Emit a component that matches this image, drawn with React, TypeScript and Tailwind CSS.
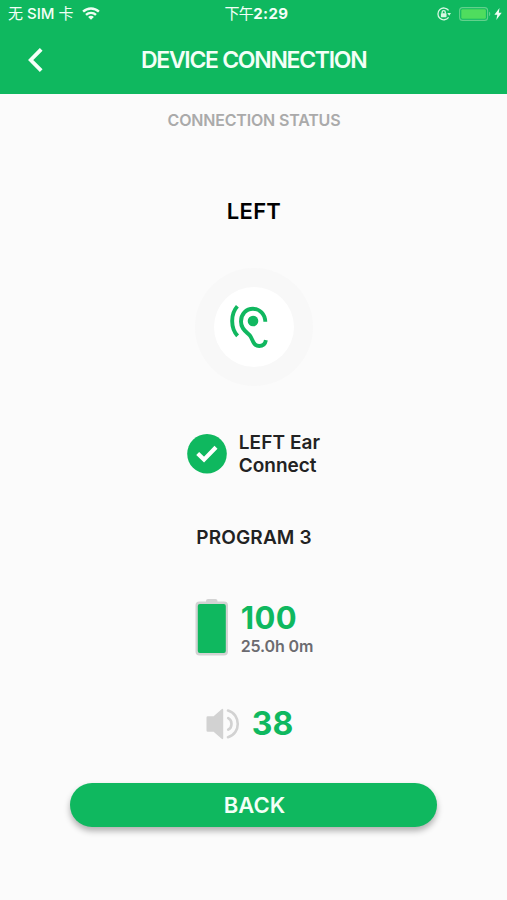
import type { ReactNode } from "react";

const FONT = "font-['Inter','Noto_Sans_CJK_SC',sans-serif]";

function WifiIcon() {
  return (
    <svg width="18" height="13" viewBox="0 0 18 13" fill="none" stroke="#effdf3" strokeWidth="2.4">
      <path d="M1.1 4.7 C5.5 0.4 12.5 0.4 16.9 4.7" />
      <path d="M4 7.9 C6.8 5.2 11.2 5.2 14 7.9" />
      <path d="M9 12.8 L6.1 9.9 C7.7 8.5 10.3 8.5 11.9 9.9 Z" fill="#effdf3" stroke="none" />
    </svg>
  );
}

function RotationLockIcon() {
  return (
    <svg width="14" height="14" viewBox="0 0 14 14" fill="none" stroke="#d8f7e3" strokeWidth="1.3">
      <path d="M11.6 3.4 A5.9 5.9 0 1 0 11.6 10.4" />
      <path d="M10.3 6 H14 L12.2 8.8 Z" fill="#d8f7e3" stroke="none" />
      <rect x="3.9" y="6.2" width="5.6" height="4" rx="0.6" fill="#d8f7e3" stroke="none" />
      <path d="M5.1 6.4 V5.2 A1.6 1.6 0 0 1 8.3 5.2 V6.4" />
    </svg>
  );
}

function StatusBattery() {
  return (
    <svg width="32" height="14" viewBox="0 0 32 14">
      <rect x="0.6" y="0.6" width="28" height="12.8" rx="3" fill="none" stroke="#62d18c" strokeWidth="1.1" />
      <rect x="2.3" y="2.3" width="24.6" height="9.4" rx="1.2" fill="#4fdd5e" />
      <path d="M30 4.8 C31.7 5.4 31.7 8.6 30 9.2 Z" fill="#62d18c" />
    </svg>
  );
}

function EarIcon() {
  return (
    <svg width="80" height="80" viewBox="0 0 80 80" fill="none" stroke="#10b75f" strokeWidth="3.9">
      <circle cx="39" cy="34" r="5.3" fill="#10b75f" stroke="none" />
      <path d="M51.3 34.8 C51.1 26.8 45.6 21.8 39 21.8 C32 21.8 27 27.2 27 34.4 C27 42 32.3 44.6 35.8 48.4 C38.8 51.8 38.6 59 45.2 59 C49.1 59 51.2 57 51.9 53.1" />
      <path d="M23.4 19.2 C16.4 26.8 16.4 41 23.6 48.9" />
    </svg>
  );
}

function BatteryIcon() {
  return (
    <svg width="34" height="57" viewBox="0 0 34 57">
      <rect x="11" y="0" width="11.5" height="6" rx="2" fill="#d3d3d3" />
      <rect x="0.5" y="2.5" width="32.5" height="54" rx="4" fill="#d3d3d3" />
      <rect x="2.8" y="5" width="28" height="49" rx="2" fill="#0fb85f" />
    </svg>
  );
}

function SpeakerIcon() {
  return (
    <svg width="34" height="32" viewBox="0 0 34 32">
      <path d="M1.8 8.2 H7.6 L15.6 1.2 Q17.2 0 17.2 2 V30 Q17.2 32 15.6 30.8 L7.6 23.8 H1.8 Q0.5 23.8 0.5 22.5 V9.5 Q0.5 8.2 1.8 8.2 Z" fill="#d2d2d2" />
      <g fill="none" stroke="#d2d2d2" strokeWidth="2.6" strokeLinecap="round">
        <path d="M22.2 10.2 C26.6 12.4 26.6 19.4 22.2 21.6" />
        <path d="M22 2.5 C35 6.2 35 25.6 22 29.2" />
      </g>
    </svg>
  );
}

function StatusBar() {
  return (
    <div className="grid h-[27px] grid-cols-3 items-center pl-2 pr-[5px] text-[15px] leading-none">
      <div className="flex items-center gap-2 whitespace-nowrap font-medium">
        <span><span className="font-normal">无</span> SIM <span className="font-normal">卡</span></span>
        <WifiIcon />
      </div>
      <div className="whitespace-nowrap pl-[3px] text-center font-bold">
        <span className="font-normal tracking-[-0.7px]">下午</span>
        <span className="tracking-[0.4px]">2:29</span>
      </div>
      <div className="flex items-center justify-end">
        <RotationLockIcon />
        <span className="ml-2"><StatusBattery /></span>
        <svg className="ml-[3px]" width="8" height="12" viewBox="0 0 8 12" fill="#effdf3">
          <path d="M5.5 0 L0.4 6.7 H3.3 L2.3 12 L7.7 4.8 H4.8 Z" />
        </svg>
      </div>
    </div>
  );
}

function Row({ className, children }: { className: string; children: ReactNode }) {
  return <div className={`flex ${className}`}>{children}</div>;
}

export default function App() {
  return (
    <div className={`flex h-[900px] w-[507px] flex-col overflow-hidden bg-[#fbfbfb] ${FONT}`}>
      <header className="h-[94px] shrink-0 bg-[#0fb85f] text-[#f3fff7]">
        <StatusBar />
        <div className="flex h-[66px] items-center">
          <button type="button" aria-label="Go back" className="ml-[27px] w-4">
            <svg width="16" height="25" viewBox="0 0 16 25" fill="none" stroke="#f5fff8" strokeWidth="3.8">
              <path d="M14.2 1.3 L3.7 12 L14.2 22.7" />
            </svg>
          </button>
          <h1 className="ml-[98px] whitespace-nowrap text-[23px] font-semibold leading-none tracking-[-1.3px]">
            DEVICE CONNECTION
          </h1>
        </div>
      </header>

      <main className="flex flex-col items-center">
        <p className="mt-4 pl-px text-[16px] font-semibold leading-5 tracking-[-0.18px] text-[#aaaaaa]">CONNECTION STATUS</p>
        <h2 className="mt-[67px] pl-px text-[22px] font-semibold leading-7 tracking-[0.3px] text-black">LEFT</h2>

        <div className="mt-[43px] flex size-[118px] items-center justify-center rounded-full bg-[#f8f8f8]">
          <div className="size-20 rounded-full bg-white"><EarIcon /></div>
        </div>

        <Row className="mt-[44px] h-[47px] items-center gap-3">
          <svg width="40" height="40" viewBox="0 0 40 40">
            <circle cx="20" cy="19.8" r="19.8" fill="#0fb85f" />
            <path d="M10.7 19.6 L17 25.6 L29 13.3" fill="none" stroke="#fff" strokeWidth="4.2" />
          </svg>
          <p className="text-[19px] font-semibold leading-[23px] text-[#222222]">
            <span className="tracking-[0.1px]">LEFT Ear</span><br />Connect
          </p>
        </Row>

        <p className="mt-[49px] pl-px text-[19px] font-semibold leading-6 tracking-[0.15px] text-[#222222]">PROGRAM 3</p>

        <Row className="mt-[49px] h-[58px] items-start gap-3 pl-px">
          <BatteryIcon />
          <div className="whitespace-nowrap">
            <div className="text-[31px] font-bold leading-[37px] tracking-[0.3px] text-[#0fb85f]">100</div>
            <div className="text-[16px] font-semibold leading-5 tracking-[-0.15px] text-[#6b6b70]">25.0h 0m</div>
          </div>
        </Row>

        <Row className="mt-[49px] h-9 items-center gap-3 pr-2">
          <SpeakerIcon />
          <span className="text-[32px] font-bold leading-9 text-[#0fb85f]">38</span>
        </Row>

        <button
          type="button"
          className="mt-[41px] h-11 w-[367px] rounded-full bg-[#0fb85f] pl-0.5 text-[22px] font-semibold leading-none text-[#f3fff7] shadow-[0_4px_6px_rgba(0,0,0,0.3)]"
        >
          BACK
        </button>
      </main>
    </div>
  );
}
